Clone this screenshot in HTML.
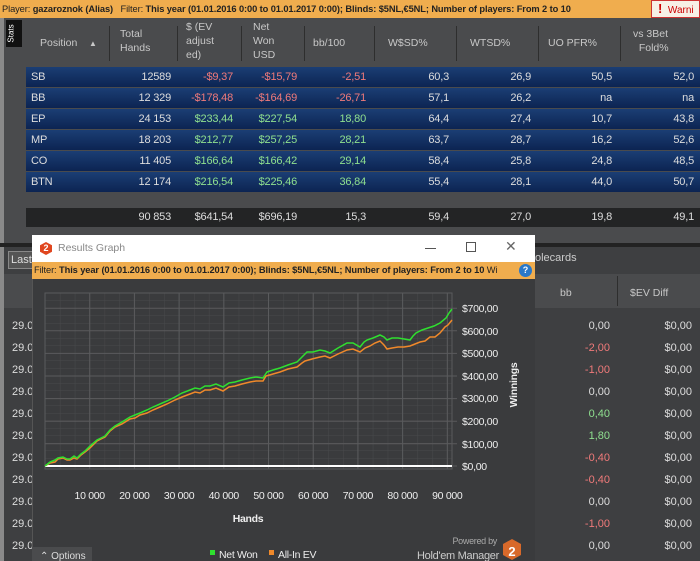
<!DOCTYPE html>
<html style="width:700px;height:561px;overflow:hidden"><head><meta charset="utf-8"><style>
*{margin:0;padding:0;box-sizing:border-box}
body{width:700px;height:561px;overflow:hidden;background:#3e3f41;font-family:"Liberation Sans",sans-serif;font-size:11px;color:#ddd;position:relative}
.a{position:absolute;white-space:nowrap}
.r{text-align:right}
.top{left:0;top:0;width:700px;height:18px;background:#f0ad4e;color:#222;font-size:9.3px;line-height:18px;padding-left:2px;letter-spacing:-0.1px}
.hd{color:#c8c8c8;font-size:10.5px;line-height:14px}
.row{position:absolute;left:26px;width:674px;height:20px;background:linear-gradient(#1b3e74,#0c2452);line-height:20px;font-size:11px;letter-spacing:-0.2px}
.row span{position:absolute;white-space:nowrap}
.g{color:#8fe08f}.rd{color:#f07a7a}
.div{position:absolute;width:1px;background:#2e2e2e}
.lr{position:absolute;font-size:11px;color:#ddd}
</style></head><body>
<div class="a top">Player: <b>gazaroznok (Alias)</b>&nbsp;&nbsp; Filter: <b>This year (01.01.2016 0:00 to 01.01.2017 0:00); Blinds: $5NL,€5NL; Number of players: From 2 to 10</b></div>
<div class="a" style="left:651px;top:0;width:49px;height:18px;background:#f7f0e6;border:1px solid #c33;color:#c00;font-size:10px;line-height:16px;padding-left:6px"><b style="font-size:13px">!</b> &nbsp;Warni</div>
<div class="a" style="left:0;top:18px;width:700px;height:225px;background:#4a4b4d"></div>
<div class="a" style="left:0;top:18px;width:4px;height:543px;background:#8a8a8a"></div>
<div class="a" style="left:6px;top:20px;width:16px;height:27px;background:#111;color:#fff;font-size:8px"><div style="transform:rotate(-90deg);position:absolute;left:-4px;top:9px">Stats</div></div>
<div class="a hd" style="left:40px;top:36px">Position &nbsp;&nbsp;&nbsp;<span style="font-size:8px">▲</span></div>
<div class="a hd" style="left:120px;top:27px">Total<br>Hands</div>
<div class="a hd" style="left:186px;top:20px">$ (EV<br>adjust<br>ed)</div>
<div class="a hd" style="left:253px;top:20px">Net<br>Won<br>USD</div>
<div class="a hd" style="left:313px;top:36px">bb/100</div>
<div class="a hd" style="left:388px;top:36px">W$SD%</div>
<div class="a hd" style="left:470px;top:36px">WTSD%</div>
<div class="a hd" style="left:548px;top:36px">UO PFR%</div>
<div class="a hd" style="left:633px;top:27px">vs 3Bet<br>&nbsp;&nbsp;Fold%</div>
<div class="div" style="left:109px;top:26px;height:35px"></div><div class="div" style="left:177px;top:26px;height:35px"></div><div class="div" style="left:241px;top:26px;height:35px"></div><div class="div" style="left:304px;top:26px;height:35px"></div><div class="div" style="left:374px;top:26px;height:35px"></div><div class="div" style="left:456px;top:26px;height:35px"></div><div class="div" style="left:538px;top:26px;height:35px"></div><div class="div" style="left:620px;top:26px;height:35px"></div>

<div class="row" style="top:67px"><span style="left:5px">SB</span><span style="right:529px">12589</span><span class="rd" style="right:467px">-$9,37</span><span class="rd" style="right:403px">-$15,79</span><span class="rd" style="right:334px">-2,51</span><span style="right:251px">60,3</span><span style="right:169px">26,9</span><span style="right:88px">50,5</span><span style="right:6px">52,0</span></div>
<div class="row" style="top:88px"><span style="left:5px">BB</span><span style="right:529px">12 329</span><span class="rd" style="right:467px">-$178,48</span><span class="rd" style="right:403px">-$164,69</span><span class="rd" style="right:334px">-26,71</span><span style="right:251px">57,1</span><span style="right:169px">26,2</span><span style="right:88px">na</span><span style="right:6px">na</span></div>
<div class="row" style="top:109px"><span style="left:5px">EP</span><span style="right:529px">24 153</span><span class="g" style="right:467px">$233,44</span><span class="g" style="right:403px">$227,54</span><span class="g" style="right:334px">18,80</span><span style="right:251px">64,4</span><span style="right:169px">27,4</span><span style="right:88px">10,7</span><span style="right:6px">43,8</span></div>
<div class="row" style="top:130px"><span style="left:5px">MP</span><span style="right:529px">18 203</span><span class="g" style="right:467px">$212,77</span><span class="g" style="right:403px">$257,25</span><span class="g" style="right:334px">28,21</span><span style="right:251px">63,7</span><span style="right:169px">28,7</span><span style="right:88px">16,2</span><span style="right:6px">52,6</span></div>
<div class="row" style="top:151px"><span style="left:5px">CO</span><span style="right:529px">11 405</span><span class="g" style="right:467px">$166,64</span><span class="g" style="right:403px">$166,42</span><span class="g" style="right:334px">29,14</span><span style="right:251px">58,4</span><span style="right:169px">25,8</span><span style="right:88px">24,8</span><span style="right:6px">48,5</span></div>
<div class="row" style="top:172px"><span style="left:5px">BTN</span><span style="right:529px">12 174</span><span class="g" style="right:467px">$216,54</span><span class="g" style="right:403px">$225,46</span><span class="g" style="right:334px">36,84</span><span style="right:251px">55,4</span><span style="right:169px">28,1</span><span style="right:88px">44,0</span><span style="right:6px">50,7</span></div>
<div class="row" style="top:208px;height:19px;background:#232425;line-height:19px"><span style="right:529px">90 853</span><span style="right:467px">$641,54</span><span style="right:403px">$696,19</span><span style="right:334px">15,3</span><span style="right:251px">59,4</span><span style="right:169px">27,0</span><span style="right:88px">19,8</span><span style="right:6px">49,1</span></div>
<div class="a" style="left:0;top:243px;width:700px;height:4px;background:#222"></div>
<div class="a" style="left:4px;top:247px;width:696px;height:314px;background:#3e3f41;overflow:hidden">
<div class="a" style="left:4px;top:4px;width:40px;height:18px;border:1px solid #888;background:#555;color:#ddd;line-height:16px;padding-left:2px">Last</div>
<div class="a" style="left:531px;top:5px;color:#ccc;font-size:11px">olecards</div>
<div class="a" style="left:0;top:27px;width:696px;height:34px;background:#4a4b4d"></div>
<div class="a hd" style="left:556px;top:39px">bb</div>
<div class="a hd" style="left:626px;top:39px">$EV Diff</div>
<div class="div" style="left:613px;top:29px;height:30px"></div>
<div class="lr" style="left:8px;top:68px;line-height:22px">29.0<br>29.0<br>29.0<br>29.0<br>29.0<br>29.0<br>29.0<br>29.0<br>29.0<br>29.0<br>29.0<br>29.0</div>
<div class="a r" style="left:536px;top:68px;width:70px;line-height:22px;font-size:11px">0,00<br><span class="rd">-2,00</span><br><span class="rd">-1,00</span><br>0,00<br><span class="g">0,40</span><br><span class="g">1,80</span><br><span class="rd">-0,40</span><br><span class="rd">-0,40</span><br>0,00<br><span class="rd">-1,00</span><br>0,00<br><span class="g">2,40</span></div>
<div class="a r" style="left:616px;top:68px;width:72px;line-height:22px;font-size:11px">$0,00<br>$0,00<br>$0,00<br>$0,00<br>$0,00<br>$0,00<br>$0,00<br>$0,00<br>$0,00<br>$0,00<br>$0,00<br>$0,00</div>
</div>
<div class="a" style="left:32px;top:235px;width:503px;height:326px;background:#3a3b3d;border-left:1px solid #555"></div>
<div class="a" style="left:32px;top:235px;width:503px;height:27px;background:#fff"></div>
<div class="a" style="left:40px;top:242px;width:12px;height:13px;background:#e0461f;clip-path:polygon(50% 0,100% 25%,100% 75%,50% 100%,0 75%,0 25%);color:#fff;font-size:9px;font-weight:bold;text-align:center;line-height:13px">2</div>
<div class="a" style="left:58px;top:242px;color:#888;font-size:10.5px">Results Graph</div>
<div class="a" style="left:425px;top:248px;width:11px;height:1px;background:#555"></div>
<div class="a" style="left:466px;top:242px;width:10px;height:10px;border:1px solid #555"></div>
<div class="a" style="left:505px;top:238px;color:#666;font-size:14px">✕</div>
<div class="a" style="left:32px;top:262px;width:503px;height:17px;background:#f0ad4e;color:#222;font-size:9.3px;line-height:17px;padding-left:2px;overflow:hidden;letter-spacing:-0.1px">Filter: <b>This year (01.01.2016 0:00 to 01.01.2017 0:00); Blinds: $5NL,€5NL; Number of players: From 2 to 10</b> Wi</div>
<div class="a" style="left:519px;top:264px;width:13px;height:13px;border-radius:50%;background:#2a78c8;color:#fff;font-size:9px;font-weight:bold;text-align:center;line-height:13px">?</div>
<svg class="a" style="left:32px;top:279px" width="503" height="282" viewBox="32 279 503 282">
<defs><pattern id="mg" x="45" y="293" width="14.9" height="7.5" patternUnits="userSpaceOnUse"><path d="M0 0V7.5M0 0H14.9" stroke="#48494b" stroke-width="1" fill="none"/></pattern></defs>
<rect x="45" y="293" width="407" height="176" fill="url(#mg)" stroke="#5a5b5d"/>
<g stroke="#5a5b5d" stroke-width="1">
<path d="M89.7 293V469M134.4 293V469M179.1 293V469M223.8 293V469M268.5 293V469M313.2 293V469M357.9 293V469M402.6 293V469M447.3 293V469"/>
<path d="M45 308.2H452M45 330.8H452M45 353.4H452M45 376H452M45 398.6H452M45 421.2H452M45 443.8H452"/>
<path d="M452 308.2h5M452 330.8h5M452 353.4h5M452 376h5M452 398.6h5M452 421.2h5M452 443.8h5M452 466h5"/>
</g>
<line x1="45" y1="466" x2="452" y2="466" stroke="#fff" stroke-width="2"/>
<polyline fill="none" stroke="#f0892a" stroke-width="1.5" points="45,466 50,463 55,462 58,459 63,458 67,460 70,460 74,458 77,459 81,455 85,452 90,448 97,441 101,439 105,437 110,431 115,427 122,424 130,419 135,418 140,415 147,413 153,410 160,407 167,404 175,400 182,397 190,394 195,392 200,393 205,390 210,390 216,388 223,391 229,387 235,386 242,384 250,382 256,381 263,381 266,376 273,374 280,372 288,369 297,367 302,363 305,361 312,359 320,357 325,356 330,358 338,354 347,350 353,349 360,352 365,348 370,346 375,343 380,341 384,345 387,349 392,348 398,347 404,347 410,346 415,344 420,342 425,341 430,337 435,337 440,333 445,327 448,325 452,320"/>
<polyline fill="none" stroke="#2fe02f" stroke-width="1.5" points="45,466 50,462 55,460 58,458 63,457 67,459 70,459 74,456 77,458 81,454 85,451 90,446 97,440 101,438 105,436 110,430 115,426 122,422 130,417 135,415 140,413 147,410 153,407 160,404 167,401 175,397 182,393 190,390 195,388 200,389 205,386 210,386 216,384 223,387 229,383 235,382 242,380 250,378 256,377 263,378 267,372 273,370 280,368 288,365 297,362 302,357 307,352 313,352 320,350 325,351 330,353 338,348 347,343 353,343 360,347 364,342 367,340 373,338 380,335 384,337 387,340 392,338 398,338 404,339 410,340 413,336 416,333 422,330 428,328 434,326 440,323 446,318 449,313 452,309"/>
<g fill="#eee" font-family="Liberation Sans, sans-serif" font-size="10.5" letter-spacing="-0.3">
<text x="462" y="312">$700,00</text><text x="462" y="335">$600,00</text><text x="462" y="357">$500,00</text><text x="462" y="380">$400,00</text><text x="462" y="402">$300,00</text><text x="462" y="425">$200,00</text><text x="462" y="448">$100,00</text><text x="462" y="470">$0,00</text>
<g text-anchor="middle"><text x="89.7" y="499">10 000</text><text x="134.4" y="499">20 000</text><text x="179.1" y="499">30 000</text><text x="223.8" y="499">40 000</text><text x="268.5" y="499">50 000</text><text x="313.2" y="499">60 000</text><text x="357.9" y="499">70 000</text><text x="402.6" y="499">80 000</text><text x="447.3" y="499">90 000</text></g>
<text x="248" y="522" text-anchor="middle" font-weight="bold" font-size="10.5">Hands</text>
<text transform="translate(517 385) rotate(-90)" text-anchor="middle" font-weight="bold" font-size="10.5">Winnings</text>
<rect x="210" y="550" width="5" height="5" fill="#2fe02f"/><text x="219" y="558" font-size="10.5">Net Won</text>
<rect x="269" y="550" width="5" height="5" fill="#f0892a"/><text x="278" y="558" font-size="10.5">All-In EV</text>
<text x="497" y="544" text-anchor="end" font-size="9" fill="#aaa">Powered by</text>
<text x="499" y="559" text-anchor="end" font-size="11" fill="#ccc">Hold'em Manager</text>
</g>
<polygon points="512,539 521,544 521,555 512,560 503,555 503,544" fill="#d8692a"/>
<text x="512" y="556" text-anchor="middle" fill="#fff" font-family="Liberation Sans, sans-serif" font-weight="bold" font-size="13">2</text>
<rect x="32" y="547" width="60" height="14" fill="#4a4b4d"/>
<text x="40" y="559" fill="#ddd" font-family="Liberation Sans, sans-serif" font-size="10">⌃  Options</text>
</svg>
</body></html>
